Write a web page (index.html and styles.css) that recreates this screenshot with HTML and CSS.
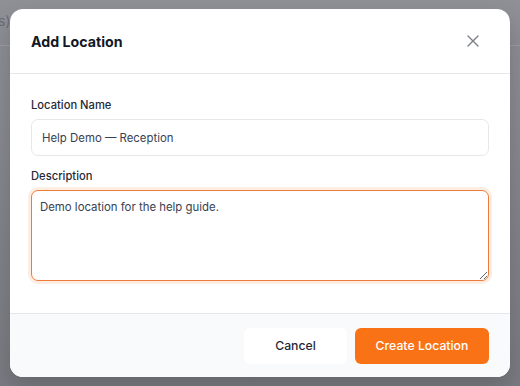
FILE: index.html
```html
<!DOCTYPE html>
<html lang="en">
<head>
    <meta charset="UTF-8">
    <meta name="viewport" content="width=device-width, initial-scale=1.0">
    <title>Add Location</title>
    <link rel="stylesheet" href="styles.css">
</head>
<body>
    <!-- page behind the dialog -->
    <div class="page">
        <div class="page-header">
            <span class="page-count">(3 locations)</span>
        </div>
    </div>

    <div class="overlay">
        <form class="modal" id="locationForm">
            <div class="modal-header">
                <h2 class="modal-title">Add Location</h2>
                <button type="button" class="close-btn" aria-label="Close">
                    <svg width="14" height="14" viewBox="0 0 14 14" fill="none" stroke="currentColor" stroke-width="1.4" stroke-linecap="round">
                        <path d="M2 2L12 12M12 2L2 12"/>
                    </svg>
                </button>
            </div>

            <div class="modal-body">
                <div class="field">
                    <label class="field-label" for="locName">Location Name</label>
                    <input class="text-input" type="text" id="locName" name="name" value="Help Demo — Reception">
                </div>

                <div class="field">
                    <label class="field-label" for="locDesc">Description</label>
                    <textarea class="text-area is-focused" id="locDesc" name="description">Demo location for the help guide.</textarea>
                </div>
            </div>

            <div class="modal-footer">
                <button type="button" class="btn btn-secondary">Cancel</button>
                <button type="submit" class="btn btn-primary">Create Location</button>
            </div>
        </form>
    </div>
</body>
</html>
```

FILE: styles.css
```css
:root {
    --primary-color: #f97316;
    --text-color: #111827;
    --muted-color: #6b7280;
    --border-color: #e5e7eb;
}
* {
    box-sizing: border-box;
}
body {
    margin: 0;
    width: 520px;
    height: 386px;
    overflow: hidden;
    position: relative;
    font-family: Inter, "Liberation Sans", sans-serif;
    background: linear-gradient(#909197, #7a7b82);
}
.page-header {
    height: 46px;
    border-bottom: 1px solid #9c9da2;
    display: flex;
    align-items: center;
    padding-bottom: 4px;
}
.page-count {
    margin-left: -72px;
    font-size: 14px;
    color: #6c6d73;
}
.overlay {
    position: absolute;
    inset: 0;
    display: flex;
    align-items: center;
    justify-content: center;
}
.modal {
    width: 500px;
    background: #fff;
    border-radius: 13px;
    overflow: hidden;
    box-shadow: 0 10px 25px rgba(0, 0, 0, 0.18);
}
.modal-header {
    height: 65px;
    padding: 0 21px;
    display: flex;
    align-items: center;
    justify-content: space-between;
    border-bottom: 1px solid var(--border-color);
}
.modal-title {
    margin: 0;
    font-size: 14.2px;
    font-weight: 700;
    color: var(--text-color);
}
.close-btn {
    border: none;
    background: none;
    padding: 0;
    margin-right: 9px;
    color: #7b7f87;
    display: flex;
    cursor: pointer;
}
.modal-body {
    padding: 23px 21px 32px;
    display: flex;
    flex-direction: column;
    gap: 12px;
}
.field {
    display: flex;
    flex-direction: column;
    gap: 6px;
}
.field-label {
    font-size: 11.2px;
    font-weight: 500;
    color: #1f2937;
    line-height: 16px;
}
.text-input,
.text-area {
    width: 100%;
    font-family: inherit;
    font-size: 11.4px;
    color: #374151;
    border: 1px solid var(--border-color);
    border-radius: 7px;
    padding: 0 10px;
    outline: none;
}
.text-input {
    height: 37px;
}
.text-area {
    height: 91px;
    padding: 7px 8px;
    line-height: 18px;
    resize: vertical;
}
.text-area.is-focused {
    border-color: #ec7b3c;
    box-shadow: 0 0 0 3px rgba(249, 115, 22, 0.13);
}
.modal-footer {
    height: 64px;
    background: #f9fafb;
    border-top: 1px solid var(--border-color);
    display: flex;
    align-items: center;
    justify-content: flex-end;
    gap: 8px;
    padding: 0 21px;
}
.btn {
    height: 36px;
    border: none;
    border-radius: 6px;
    font-family: inherit;
    font-size: 12.25px;
    font-weight: 500;
    cursor: pointer;
}
.btn-secondary {
    width: 103px;
    background: #fff;
    color: #1f2937;
}
.btn-primary {
    width: 134px;
    background: var(--primary-color);
    color: #fff;
}
```
